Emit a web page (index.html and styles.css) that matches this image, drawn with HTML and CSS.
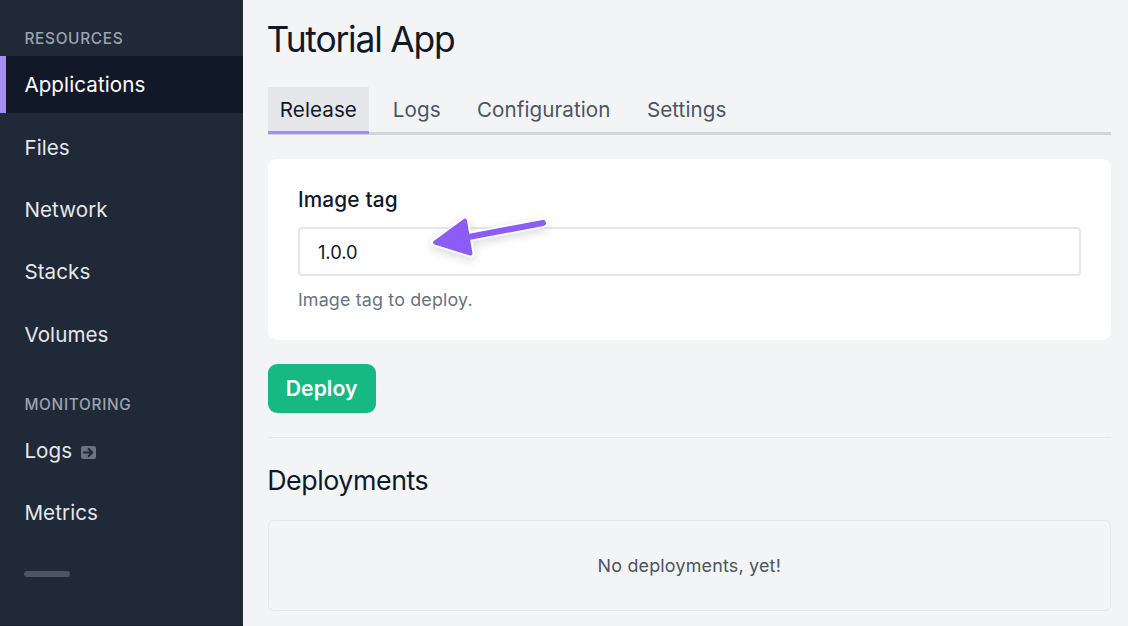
FILE: index.html
```html
<!DOCTYPE html>
<html lang="en">
<head>
<meta charset="utf-8">
<title>Tutorial App</title>
<link rel="stylesheet" href="styles.css">
</head>
<body>
<div class="layout">
  <aside class="sidebar">
    <h2 class="nav-title"><span>RESOURCES</span></h2>
    <nav class="nav">
      <a class="nav-item active"><span>Applications</span></a>
      <a class="nav-item"><span>Files</span></a>
      <a class="nav-item"><span>Network</span></a>
      <a class="nav-item"><span>Stacks</span></a>
      <a class="nav-item"><span>Volumes</span></a>
    </nav>
    <h2 class="nav-title second"><span>MONITORING</span></h2>
    <nav class="nav">
      <a class="nav-item"><span>Logs</span>
        <svg class="external" viewBox="0 0 15 13"><rect width="15" height="13" rx="2" fill="#6b7280"/><path d="M3 6.5h8M7.7 3l3.5 3.5-3.5 3.5" fill="none" stroke="#1f2937" stroke-width="2.2" stroke-linecap="round" stroke-linejoin="round"/></svg>
      </a>
      <a class="nav-item"><span>Metrics</span></a>
    </nav>
    <div class="divider"></div>
  </aside>
  <main class="main">
    <h1 class="title"><span>Tutorial App</span></h1>
    <nav class="tabs">
      <a class="tab current"><span>Release</span></a>
      <a class="tab"><span>Logs</span></a>
      <a class="tab"><span>Configuration</span></a>
      <a class="tab"><span>Settings</span></a>
    </nav>
    <section class="card">
      <div class="label"><span>Image tag</span></div>
      <div class="field"><span>1.0.0</span>
        <svg class="arrow" viewBox="0 0 140 60"><g stroke-linecap="round" stroke-linejoin="round" fill="#8b5cf6"><g class="outline" stroke="#fff"><path d="M40 29.5 117 15" stroke-width="9.5"/><path d="M9 34.5 39 12.7 44.5 45.5Z" stroke-width="8"/></g><g stroke="#8b5cf6"><path d="M40 29.5 117 15" stroke-width="6.2"/><path d="M9 34.5 39 12.7 44.5 45.5Z" stroke-width="4"/></g></g></svg>
      </div>
      <div class="help"><span>Image tag to deploy.</span></div>
    </section>
    <button class="deploy"><span>Deploy</span></button>
    <hr class="rule">
    <h2 class="subtitle"><span>Deployments</span></h2>
    <div class="empty"><span>No deployments, yet!</span></div>
  </main>
</div>
</body>
</html>
```
FILE: styles.css
```css
* { box-sizing: border-box; }
body { margin: 0; background: #f3f4f6; color: #111827; font-family: Inter, "Liberation Sans", sans-serif; }
h1, h2 { margin: 0; font-weight: 400; }
.layout { display: flex; height: 626px; overflow: hidden; }
.sidebar { width: 243.3px; flex: none; background: #1f2937; padding-top: 26px; border-bottom: 1px solid #18202f; }
.nav-title { padding-left: 24.4px; height: 24px; line-height: 25px; font-size: 15.4px; font-weight: 500; letter-spacing: .68px; color: #9ca3af; }
.nav-title.second { margin-top: 29.5px; }
.nav { display: flex; flex-direction: column; gap: 6.2px; padding-top: 6.4px; }
.nav-item { height: 56.2px; padding-left: 24.4px; display: flex; align-items: center; gap: 9px; color: #e5e7eb; font-size: 20.6px; letter-spacing: .08px; line-height: 30px; }
.nav-item span { padding-top: 1.4px; }
.nav-item.active { background: #111827; color: #fff; border-left: 6px solid #a78bfa; padding-left: 18.4px; }
.external { width: 15px; height: 13px; margin-top: 4px; }
.divider { width: 46px; height: 6px; border-radius: 3px; background: #4b5563; margin: 30px 0 0 24.3px; }
.main { flex: 1; padding: 15px 17px 0 24.3px; }
.title { height: 48px; line-height: 49px; font-size: 35.4px; letter-spacing: -1.2px; margin-left: -1px; }
.tabs { display: flex; gap: 12px; height: 71.5px; padding-top: 24.3px; border-bottom: 3px solid #d1d5db; }
.tab { height: 47.2px; padding: 0 12.2px; line-height: 46px; font-size: 20.6px; letter-spacing: .08px; color: #4b5563; }
.tab.current { width: 101px; color: #111827; background: #e5e7eb; border-bottom: 3px solid #a78bfa; }
.card { margin-top: 24.5px; height: 181px; padding: 25px 30.3px; background: #fff; border-radius: 9px; }
.label { height: 43px; line-height: 32px; font-size: 20.8px; font-weight: 500; letter-spacing: .15px; }
.field { position: relative; height: 49px; border: 2px solid #e5e7eb; border-radius: 4px; padding-left: 18px; line-height: 46px; font-size: 18.3px; }
.arrow { position: absolute; left: 126px; top: -21px; width: 140px; height: 60px; overflow: visible; }
.outline { filter: drop-shadow(0 3px 5px rgba(0,0,0,.15)); }
.help { margin-top: 8px; line-height: 32px; font-size: 17.9px; letter-spacing: .15px; color: #6b7280; }
.deploy { display: block; margin-top: 24px; width: 108px; height: 49px; border: 0; border-radius: 9px; background: #15b981; color: #fff; font: 600 21.2px/30px Inter, sans-serif; padding: 0 0 2px; }
.rule { margin: 24px 0 0; border: 0; height: 1px; background: #e5e7eb; }
.subtitle { height: 82px; line-height: 84px; font-size: 26.8px; letter-spacing: -.45px; margin-left: -.4px; }
.empty { height: 91px; border: 1.5px solid #e5e7eb; border-radius: 6px; display: flex; align-items: center; justify-content: center; font-size: 17.9px; letter-spacing: .2px; color: #4b5563; }
```
